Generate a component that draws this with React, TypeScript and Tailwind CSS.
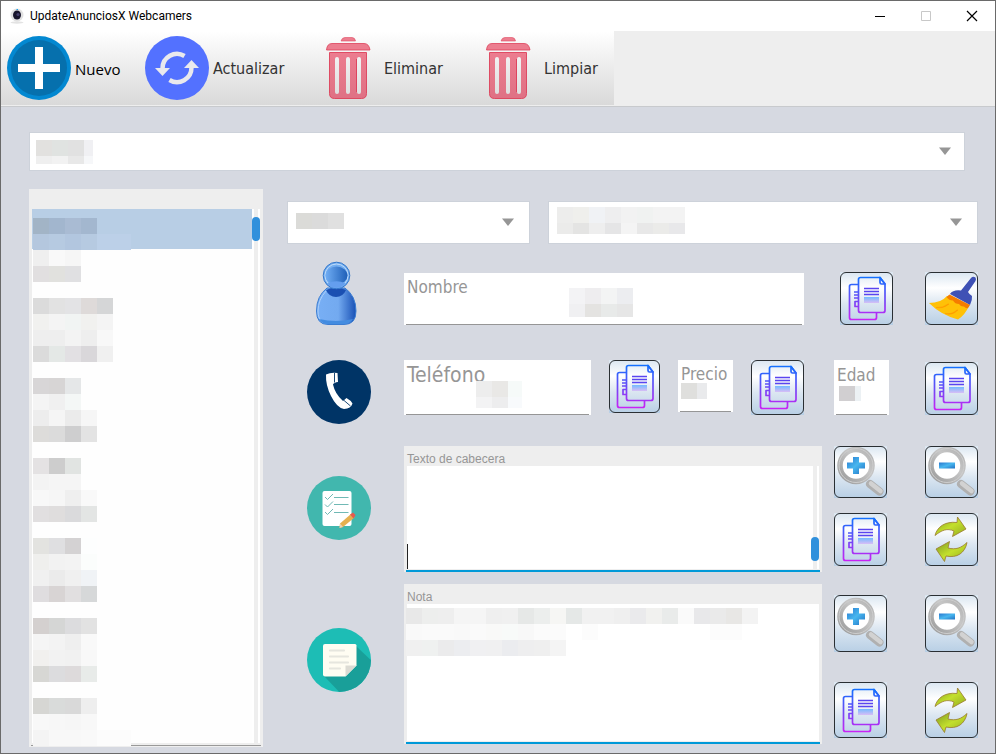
import React from "react";

const TAHOMA = "font-['DejaVu_Sans_Condensed','Noto_Sans',sans-serif]";

function Mosaic({ rows, className }: { rows: string[]; className: string }) {
  return (
    <div aria-hidden="true" className={`pointer-events-none absolute overflow-hidden ${className}`}>
      {rows.map((row, i) => (
        <div key={i} className="flex h-4 w-max">
          {row.split(" ").map((c, j) => (
            <span key={j} className="h-4 w-4" style={{ backgroundColor: c.length > 1 ? `#${c}` : "transparent" }} />
          ))}
        </div>
      ))}
    </div>
  );
}

const listRows = [
  "a2b4c6 a2b6ce a9bbd3 a3b7cf",
  "b4c7de b6cae1 b2c6df b6cae1 bcd0e8 bcd0e8 bcd0e8",
  "efefef f9f9f9 f6f6f6",
  "e1dfe0 e1e1de e0e0e2",
  "-",
  "dbdbdb e2e2e2 e3e3e5 dedad9 d5d6d7",
  "f1f1ef f4f4f4 f1f4f3 f1f1ef f4f4f4",
  "eeeeee eeeeee f3f3f3 eeeeee f8f8f8",
  "dbdbdb e4e8e6 e2e0e3 d9d7da f0f0f0",
  "-",
  "d8d6d7 d7d5d5 e5e7e8",
  "f4f4f4 f0f0f0 f4f7f6",
  "ededed f5f5f5 ebebeb f6f6f6",
  "dddcda dbdbdb cececf e3e3e3",
  "-",
  "e4e2e3 cdcdcd e1e4e2",
  "f3f3f3 f5f5f5 f5f5f5",
  "f8f8f8 f6f6f6 efefef f9f9f9",
  "e1dfe0 dfdddd dadadc e3e5e4",
  "-",
  "e3e3e0 dfdfe1 d4d2d3 fdfefe",
  "efefed f2f2f2 f3f3f3 fbfdfc",
  "f0f0f0 ebebeb f0f0f0 f0f3f6",
  "dfdddf d8d4d4 e1dfe0 d6d8d9",
  "-",
  "d4d0cf d5d6d5 dcdcde e2e2e2",
  "f5f5f5 f3f3f3 efefef f9f9f9",
  "f1f0ee f2f2f2 f1f1f1 f8f8f8",
  "d7d7d4 dcdcde dddadb e8ebe9",
  "-",
  "d6d6d3 d9dbda d9d9d9 eeeeee",
  "f8f8f8 f7f7f7 f6f6f6 f8f8f8",
  "f4f4f4 f8f8f8 f8f8f8 f9f9f9 fcfcfc fcfcfc fcfcfc",
];

const noteRows = [
  "e8e8e8 edeeed eeeeee f5f5f5 f5f5f5 efefef f0f0f0 e6e8e7 eceeed f6f6f4 e5e8e7 f1f1f1 f1f1f1 efefef eaeaec f1f1ef e9ebea fafafa e8e8ea eaeaea e8e7e5 f3f3f3",
  "f9f9f9 fafafa fafafa f9f9f9 fafafa f9f9f8 f8faf9 f8f8f8 fbfbfb fbfbfb - fcfcfc - - - - - - - fcfcfc fcfcfc",
  "f0f0f0 eff1f0 ebebec ecedf0 f0f0f2 f0f0f1 ebecef eeeeef efefef f4f4f4",
];

function Combo({ name, className, arrow, children }: { name: string; className: string; arrow: string; children: React.ReactNode }) {
  return (
    <div className={`relative border border-[#cdd2da] bg-white ${className}`}>
      <select aria-label={name} className="block h-full w-full appearance-none bg-transparent px-2 outline-none" />
      {children}
      <svg aria-hidden="true" className={`pointer-events-none absolute top-1/2 -mt-[5px] h-2 w-3 ${arrow}`} viewBox="0 0 12 8">
        <path d="M0 0.500h12L6 8z" fill="#969696" />
      </svg>
    </div>
  );
}

function Field({ id, label, size, className, children }: { id: string; label: string; size: string; className: string; children: React.ReactNode }) {
  return (
    <div className={`relative flex flex-col bg-white ${className}`}>
      <label htmlFor={id} className={`block pl-[3px] text-[#969696] ${TAHOMA} ${size}`}>{label}</label>
      <input id={id} type="text" className="ml-0.5 mr-0.5 min-h-0 min-w-0 flex-1 border-b border-[#969696] bg-transparent outline-none" />
      {children}
    </div>
  );
}

function Tool({ name, className, children }: { name: string; className: string; children: React.ReactNode }) {
  return (
    <button type="button" aria-label={name} className={`shrink-0 bg-[linear-gradient(#dae6f1,#ffffff_30%,#dbe6f1_60%,#b8cfe5)] ${className}`}>
      <span className="flex h-full w-full items-center justify-center overflow-hidden rounded-[6px] border border-[#2a2f33]">{children}</span>
    </button>
  );
}

function CopyIcon() {
  return (
    <svg className="-m-1 h-[53px] w-[53px] shrink-0" viewBox="0 0 53 53" fill="none" strokeWidth="1.700" strokeLinejoin="round">
      <defs>
        <linearGradient id="page" gradientUnits="userSpaceOnUse" x1="0" y1="5" x2="0" y2="48">
          <stop offset="0" stopColor="#1271ff" />
          <stop offset="0.500" stopColor="#6a4af6" />
          <stop offset="1" stopColor="#cb22f5" />
        </linearGradient>
        <linearGradient id="block" x1="0" y1="0" x2="0" y2="1">
          <stop offset="0" stopColor="#74bbff" />
          <stop offset="1" stopColor="#d8bdf6" />
        </linearGradient>
      </defs>
      <g stroke="url(#page)">
        <path d="M18.500 12.500H11.500Q9.500 12.500 9.500 14.500V45.500Q9.500 47.500 11.500 47.500H34.500Q36.500 47.500 36.500 45.500V41" />
        <path d="M20.500 5.500H40L45 12V38.500Q45 40.500 43 40.500H20.500Q18.500 40.500 18.500 38.500V7.500Q18.500 5.500 20.500 5.500z" />
        <path d="M40 5.500V10.500Q40 12 41.500 12H45z" />
        <path d="M14 20H18M14 23H18M14 26H18M18.500 29.500H15V34.500H18.500" />
      </g>
      <path d="M24 16.500h15M24 19.500h15M24 22.500h15" stroke="#5a45f0" strokeWidth="1.300" />
      <path d="M24 25h15v6h-15z" fill="url(#block)" />
    </svg>
  );
}

function BroomIcon() {
  return (
    <svg className="-m-1 h-[53px] w-[53px] shrink-0" viewBox="0 0 53 53">
      <path d="M46 6Q48 4 50.500 5.500Q51.500 7 50.500 9L43 20Q44 22 47 24Q47.500 28 45 33L25 22Q28 17.500 36 18.500z" fill="#3f51b5" />
      <path d="M22 24Q16 31 4 31Q16 43 33 47.500Q40 43 44 34z" fill="#ffc107" />
      <path d="M24.500 22.500L45 33L43 36Q41 37 39 34.500Q36 35 34 32Q30 32 28 28.500Q24 28.500 21.500 25z" fill="#f57c00" />
      <path d="M23 32Q18 36 11 35.500Q18 37 24 32zM32 38Q26 43 20 41.500Q27 44 33 38z" fill="#ff9800" stroke="#ff9800" strokeWidth="0.500" />
    </svg>
  );
}

function LensIcon({ plus }: { plus?: boolean }) {
  return (
    <svg className="-m-1 h-[53px] w-[53px] shrink-0" viewBox="0 0 53 53">
      <defs>
        <linearGradient id="rim" x1="0" y1="1" x2="1" y2="0">
          <stop offset="0" stopColor="#9a9a9a" />
          <stop offset="0.600" stopColor="#c6c6c6" />
          <stop offset="1" stopColor="#b2b2b2" />
        </linearGradient>
        <linearGradient id="sign" x1="0" y1="0" x2="1" y2="1">
          <stop offset="0" stopColor="#2a78cf" />
          <stop offset="0.500" stopColor="#48b7ef" />
          <stop offset="1" stopColor="#2372c4" />
        </linearGradient>
      </defs>
      <path d="M36 38L45.500 45.500" stroke="#b0b0b0" strokeWidth="8" strokeLinecap="round" />
      <path d="M37 37.500L46.500 45" stroke="#d2d2d2" strokeWidth="4.500" strokeLinecap="round" />
      <circle cx="22" cy="19.500" r="16" fill="#fff" stroke="url(#rim)" strokeWidth="5.500" />
      <circle cx="22" cy="19.500" r="17" fill="none" stroke="#cdcdcd" strokeWidth="1" />
      {plus ? (
        <path d="M19 11h6v5.500h6v6h-6v5.500h-6v-5.500h-6v-6h6z" fill="url(#sign)" />
      ) : (
        <path d="M14 16.500h16v6h-16z" fill="url(#sign)" />
      )}
    </svg>
  );
}

function CycleIcon() {
  return (
    <svg className="-m-1 h-[53px] w-[53px] shrink-0" viewBox="0 0 53 53">
      <defs>
        <linearGradient id="leaf" x1="0" y1="0" x2="1" y2="1">
          <stop offset="0" stopColor="#7f9a22" />
          <stop offset="0.500" stopColor="#c3df2c" />
          <stop offset="1" stopColor="#93ab20" />
        </linearGradient>
      </defs>
      <g fill="url(#leaf)" stroke="#9a7a2e" strokeWidth="0.800" strokeLinejoin="round">
        <path d="M10 22.500C12 14 20 8 32 9.500L32.500 4L41 16L27.500 23.500L29 18C22 15 17 17 10 22.500z" />
        <path d="M42 29.500C40 40 32 45.500 21 43L19.500 48.500L11 36L24.500 28.500L23 35C31 37 36 35 42 29.500z" />
      </g>
    </svg>
  );
}

function PlusCircle() {
  return (
    <svg className="h-16 w-16 shrink-0" viewBox="0 0 64 64">
      <circle cx="32" cy="32" r="32" fill="#0388d1" />
      <circle cx="32" cy="32" r="28" fill="#0670ad" />
      <path d="M28 11h8v17h17v8H36v17h-8V36H11v-8h17z" fill="#fff" />
    </svg>
  );
}

function RefreshCircle() {
  return (
    <svg className="h-16 w-16 shrink-0" viewBox="0 0 64 64">
      <circle cx="32" cy="32" r="32" fill="#5371ff" />
      <g fill="none" stroke="#e9e9ed" strokeWidth="4.500">
        <path d="M39.500 20A14.500 14.500 0 0 0 17.500 32.500" />
        <path d="M24.500 44A14.500 14.500 0 0 0 46.500 31.500" />
      </g>
      <path d="M10 32h15l-7.500 8zM39 32h15L46.500 24z" fill="#e9e9ed" />
    </svg>
  );
}

function TrashIcon() {
  return (
    <svg className="h-16 w-16 shrink-0" viewBox="0 0 64 64">
      <defs>
        <linearGradient id="bin" x1="0" y1="0" x2="0" y2="1">
          <stop offset="0" stopColor="#ec7d8f" />
          <stop offset="1" stopColor="#df7184" />
        </linearGradient>
      </defs>
      <path d="M25 5Q26 1.500 29 1.500H36Q39 1.500 39.500 5z" fill="#ec7d8f" stroke="#e04a62" strokeWidth="0.600" />
      <path d="M10.500 14Q11 7.500 16 7.500H48Q53 7.500 54 14z" fill="#ec7d8f" stroke="#dd4059" strokeWidth="0.800" />
      <path fillRule="evenodd" d="M13.500 16.500h37V57.500Q50.500 62.500 45.500 62.500H18.500Q13.500 62.500 13.500 57.500zM19 23V56a2 2 0 0 0 4 0V23a2 2 0 0 0-4 0zM30 23V56a2 2 0 0 0 4 0V23a2 2 0 0 0-4 0zM41 23V56a2 2 0 0 0 4 0V23a2 2 0 0 0-4 0z" fill="url(#bin)" />
      <path d="M13.500 16.500h37V57.500Q50.500 62.500 45.500 62.500H18.500Q13.500 62.500 13.500 57.500zM40.500 23V56" fill="none" stroke="#dd4059" strokeWidth="0.900" />
    </svg>
  );
}

function PersonIcon() {
  return (
    <svg className="h-16 w-16 shrink-0" viewBox="0 0 64 64">
      <defs>
        <linearGradient id="torso" x1="0" y1="0" x2="1" y2="0">
          <stop offset="0" stopColor="#78aff5" />
          <stop offset="0.550" stopColor="#73aaf0" />
          <stop offset="1" stopColor="#1850b5" />
        </linearGradient>
        <linearGradient id="face" x1="0" y1="0" x2="1" y2="0">
          <stop offset="0" stopColor="#70adf4" />
          <stop offset="1" stopColor="#1f60b8" />
        </linearGradient>
      </defs>
      <path d="M20 27H38Q49 35 49 50Q49 63.500 37 63.500H21Q9.500 63.500 9.500 50Q9.500 35 20 27z" fill="url(#torso)" stroke="#3b7dd2" strokeWidth="1" />
      <path d="M19 29Q29 24 39 29Q36 36 29 36Q22 36 19 29z" fill="#1b50b2" />
      <path d="M19 30Q11 39 11 50Q11 57 14 59" fill="none" stroke="#acd0fa" strokeWidth="1" />
      <path d="M12 58Q29 62 46 58Q43 63 37 63H21Q15 63 12 58z" fill="#438ce0" />
      <circle cx="29.500" cy="14.500" r="13.300" fill="#73aef0" stroke="#3477ca" strokeWidth="1" />
      <circle cx="29.500" cy="14.500" r="11.500" fill="none" stroke="#c0dcfa" strokeWidth="1" />
      <ellipse cx="29.500" cy="14.500" rx="11" ry="9" fill="url(#face)" />
      <path d="M20.500 22.500Q29.500 18 38.500 22.500Q34 27 29.500 27Q24 27 20.500 22.500z" fill="#649eee" />
    </svg>
  );
}

function PhoneIcon() {
  return (
    <svg className="h-16 w-16 shrink-0" viewBox="0 0 64 64">
      <circle cx="32" cy="32" r="32" fill="#003466" />
      <path d="M19 14.500Q24 12 30.500 13L31 22Q27 22.500 26 24.500Q28 34 36 41L39.500 38Q44 40.500 45.500 43.500Q44 48.500 37 49Q30 48 24 36Q18.500 25 19 14.500z" fill="#fff" />
      <path d="M27.500 13V22.500M36.500 40L43.500 46" stroke="#003466" strokeWidth="0.900" />
    </svg>
  );
}

function ChecklistIcon() {
  return (
    <svg className="h-16 w-16 shrink-0" viewBox="0 0 64 64" fill="none">
      <circle cx="32" cy="32" r="32" fill="#41b7ae" />
      <rect x="15.500" y="15" width="29" height="35" rx="2" fill="#fff" />
      <g stroke="#70b9b5" strokeWidth="1">
        <path d="M18 21l2.500 2.500L26 18M18 28.500l2.500 2.500L26 25.500M18 36l2.500 2.500L26 33" />
        <path d="M27 21.500H41.500M27 28.500H41.500M27 36.500H41.500" />
      </g>
      <path d="M33 47.500L44 38L47.500 41.500L36 51L32.500 52z" fill="#e6b04f" />
      <path d="M33 47.500L36 51L32.500 52z" fill="#e9d3b6" />
      <path d="M43 38.500L46 36.500L48.500 39L46.500 42.500z" fill="#e65b4e" />
    </svg>
  );
}

function NoteIcon() {
  return (
    <svg className="h-16 w-16 shrink-0" viewBox="0 0 64 64" fill="none">
      <defs>
        <clipPath id="disc"><circle cx="32" cy="32" r="32" /></clipPath>
      </defs>
      <circle cx="32" cy="32" r="32" fill="#1dbdb5" />
      <path clipPath="url(#disc)" d="M49 18L70 38V70H38L17 48z" fill="#199f99" />
      <path d="M18 16H48Q49.500 16 49.500 17.500V37.500L38.500 48.500H18Q16 48.500 16 46.500V18Q16 16 18 16z" fill="#fffdf2" />
      <path d="M38.500 37.500H49.500L38.500 48.500z" fill="#dcdbd3" />
      <path d="M23 22.500H37M23 28.500H41M23 34.500H41M23 40.500H33" stroke="#e6e6de" strokeWidth="2.200" strokeLinecap="round" />
    </svg>
  );
}

function WebcamIcon() {
  return (
    <svg className="h-4 w-4" viewBox="0 0 16 16">
      <ellipse cx="8" cy="14.500" rx="6.500" ry="1.200" fill="#e3e3e3" />
      <circle cx="8" cy="7" r="6.500" fill="#e1e1e1" />
      <ellipse cx="8" cy="7" rx="4" ry="4.500" fill="#17142b" />
      <circle cx="9" cy="6.500" r="1.600" fill="#443e6b" />
      <path d="M7.500 1h1.500v1h-1.500z" fill="#18a2e8" />
    </svg>
  );
}

function TextPanel({ id, label, className, children, scroll }: { id: string; label: string; className: string; children: React.ReactNode; scroll?: boolean }) {
  return (
    <div className={`relative flex min-w-0 flex-1 flex-col bg-[#eeeeee] pl-0.5 pr-0.5 ${className}`}>
      <label htmlFor={id} className="block h-5 pl-px pt-[5px] font-['Liberation_Sans',Arial,sans-serif] text-xs leading-4 text-[#969696]">{label}</label>
      <div className="flex min-h-0 flex-1 border-b-2 border-[#0099d8] pb-px pl-px">
        <textarea id={id} className="block h-full min-w-0 flex-1 resize-none bg-white outline-none" />
        {scroll && (
          <div className="relative flex w-2 justify-center bg-white">
            <span className="w-1 bg-[#eeeeee]" />
            <span className="absolute bottom-2 left-0 h-6 w-2 rounded-full bg-[#3090dc]" />
          </div>
        )}
        <div className="w-px" />
      </div>
      {children}
    </div>
  );
}

export default function App() {
  const toolbarButton = "flex h-full items-center gap-1 bg-gradient-to-b from-white to-[#d9d9d9] text-left";
  return (
    <div className="flex min-h-screen flex-col border border-[#6a6a6a] bg-[#d6d9e1] font-['Open_Sans','Noto_Sans',sans-serif] text-black">
      <header className="flex h-[30px] items-center bg-white pl-2">
        <WebcamIcon />
        <h1 className="ml-[5px] flex-1 font-['Roboto','Noto_Sans',sans-serif] text-xs">UpdateAnunciosX Webcamers</h1>
        <div className="flex gap-[30px] pr-[15px]">
          <button type="button" aria-label="Minimizar" className="flex h-4 w-4 items-center justify-center">
            <svg className="h-3 w-3" viewBox="0 0 12 12"><path d="M1 6.500h10" stroke="#000" /></svg>
          </button>
          <button type="button" aria-label="Maximizar" disabled className="flex h-4 w-4 items-center justify-center">
            <svg className="h-3 w-3" viewBox="0 0 12 12"><path d="M1.500 1.500h9v9h-9z" fill="none" stroke="#c8c8c8" /></svg>
          </button>
          <button type="button" aria-label="Cerrar" className="flex h-4 w-4 items-center justify-center">
            <svg className="h-3 w-3" viewBox="0 0 12 12"><path d="M1 1l10 10M11 1L1 11" stroke="#000" strokeWidth="1.200" /></svg>
          </button>
        </div>
      </header>

      <nav className="flex h-[76px] border-b border-[#c8cacd] bg-[#eeeeee] pb-px">
        <button type="button" className={`${toolbarButton} w-[138px] pl-1.5 text-[15px]`}>
          <PlusCircle /><span className="pt-0.5">Nuevo</span>
        </button>
        <button type="button" className={`${toolbarButton} w-[171px] pl-1.5 text-base text-[#333333] ${TAHOMA}`}>
          <RefreshCircle /><span className="pt-0.5">Actualizar</span>
        </button>
        <button type="button" className={`${toolbarButton} w-40 pl-1.5 text-base text-[#333333] ${TAHOMA}`}>
          <TrashIcon /><span className="pt-0.5">Eliminar</span>
        </button>
        <button type="button" className={`${toolbarButton} w-36 pl-1.5 text-base text-[#333333] ${TAHOMA}`}>
          <TrashIcon /><span className="pt-0.5">Limpiar</span>
        </button>
      </nav>

      <main className="flex flex-1 flex-col pb-1.5 pl-7 pr-[17px] pt-[25px]">
        <Combo name="Anuncio" className="mr-[13px] h-[39px]" arrow="right-[13px]">
          <Mosaic className="left-1.5 top-[7px] h-6 w-[57px]" rows={["e2e1df e0e3e1 e1e1e1 f0f0f3", "efefef f2f2f2 e8e8e8 f6f7f9"]} />
        </Combo>

        <div className="mt-[18px] flex flex-1 gap-6">
          <section className="relative flex w-[234px] shrink-0 flex-col bg-[#eeeeee] px-0.5 pb-px pt-5">
            <div className="flex flex-1 border-b border-[#999999] pb-0.5 pl-px pr-px">
              <ul role="listbox" aria-label="Anuncios" className="flex-1 bg-[#fefefe]">
                <li role="option" aria-selected="true" className="h-10 bg-[#b8cee5]" />
              </ul>
              <div className="relative flex w-2 justify-center bg-white">
                <span className="w-1 bg-[#eeeeee]" />
                <span className="absolute left-0 top-2 h-6 w-2 rounded-full bg-[#3090dc]" />
              </div>
            </div>
            <Mosaic className="left-1 top-[29px] h-[528px] w-[98px]" rows={listRows} />
          </section>

          <form className="mt-3 flex min-w-0 flex-1 flex-col" onSubmit={(e) => e.preventDefault()}>
            <div className="flex gap-[18px]">
              <Combo name="Tipo" className="h-[43px] w-[243px] shrink-0" arrow="right-[15px]">
                <Mosaic className="left-2 top-[11px] h-4 w-12" rows={["dbdbd8 dbdbdb e0e0e0"]} />
              </Combo>
              <Combo name="Lugar" className="h-[43px] min-w-0 flex-1" arrow="right-[15px]">
                <Mosaic
                  className="left-2 top-[5px] h-[27px] w-32"
                  rows={["ededec efefec f0f2f5 eeeeef f2f2f2 f0f2f1 f3f3f3 f3f3f3", "ebebea e4e4e3 eeeeee e5e5e6 f4f4f4 e8e8e8 ebebe9 e8e8ea"]}
                />
              </Combo>
            </div>

            <div className="mt-[17px] flex items-end pl-5">
              <PersonIcon />
              <Field id="nombre" label="Nombre" size="text-[17px] leading-7" className="ml-[33px] h-[52px] min-w-0 flex-1">
                <Mosaic className="left-[165px] top-[15px] h-[29px] w-16" rows={["f3f3f5 eeedef f3f4f4 ecedf0", "f0f0f2 e4e3e1 e8eae9 e6e6e6"]} />
              </Field>
              <Tool name="Copiar nombre" className="ml-9 h-[53px] w-[53px]"><CopyIcon /></Tool>
              <Tool name="Limpiar nombre" className="ml-8 h-[53px] w-[53px]"><BroomIcon /></Tool>
            </div>

            <div className="mt-[35px] flex items-start pl-5">
              <PhoneIcon />
              <Field id="telefono" label="Teléfono" size="text-[21px] leading-[30px]" className="ml-[33px] h-[55px] min-w-0 flex-1">
                <Mosaic className="left-[72px] top-[21px] h-[27px] w-[46px]" rows={["ededed e9e8e6 f6faf9", "f3f3f4 ededee f8fafc"]} />
              </Field>
              <Tool name="Copiar teléfono" className="ml-[18px] h-[53px] w-[51px]"><CopyIcon /></Tool>
              <Field id="precio" label="Precio" size="text-[17px] leading-7" className="ml-[18px] h-[52px] w-[55px]">
                <Mosaic className="left-[3px] top-[23px] h-4 w-[26px]" rows={["dfdfdd e9eaec"]} />
              </Field>
              <Tool name="Copiar precio" className="ml-[18px] h-[55px] w-[53px]"><CopyIcon /></Tool>
              <Field id="edad" label="Edad" size="text-[17px] leading-[30px]" className="ml-[30px] h-[55px] w-[55px]">
                <Mosaic className="left-[5px] top-[26px] h-[15px] w-[22px]" rows={["d1cfd1 ecf1f4"]} />
              </Field>
              <Tool name="Copiar edad" className="ml-9 mt-0.5 h-[53px] w-[53px]"><CopyIcon /></Tool>
            </div>

            <div className="mt-[22px] flex items-start pl-5">
              <div className="pt-[30px]"><ChecklistIcon /></div>
              <TextPanel id="cabecera" label="Texto de cabecera" className="ml-[33px] h-[126px]" scroll>
                <span className="absolute bottom-[3px] left-[3px] h-[25px] w-px bg-[#222222]" />
              </TextPanel>
              <div className="ml-3 grid grid-cols-[53px_53px] gap-x-[38px] gap-y-[15px]">
                <Tool name="Ampliar cabecera" className="h-[52px]"><LensIcon plus /></Tool>
                <Tool name="Reducir cabecera" className="h-[52px]"><LensIcon /></Tool>
                <Tool name="Copiar cabecera" className="h-[53px]"><CopyIcon /></Tool>
                <Tool name="Renovar cabecera" className="h-[53px]"><CycleIcon /></Tool>
              </div>
            </div>

            <div className="mt-3 flex items-start pl-5">
              <div className="pt-11"><NoteIcon /></div>
              <TextPanel id="nota" label="Nota" className="ml-[33px] h-40">
                <Mosaic className="left-0.5 top-6 h-12 w-[352px]" rows={noteRows} />
              </TextPanel>
              <div className="ml-3 grid grid-cols-[53px_53px] gap-x-[38px] gap-y-[30px] pt-[11px]">
                <Tool name="Ampliar nota" className="h-[57px]"><LensIcon plus /></Tool>
                <Tool name="Reducir nota" className="h-[57px]"><LensIcon /></Tool>
                <Tool name="Copiar nota" className="h-14"><CopyIcon /></Tool>
                <Tool name="Renovar nota" className="h-14"><CycleIcon /></Tool>
              </div>
            </div>
          </form>
        </div>
      </main>
    </div>
  );
}
